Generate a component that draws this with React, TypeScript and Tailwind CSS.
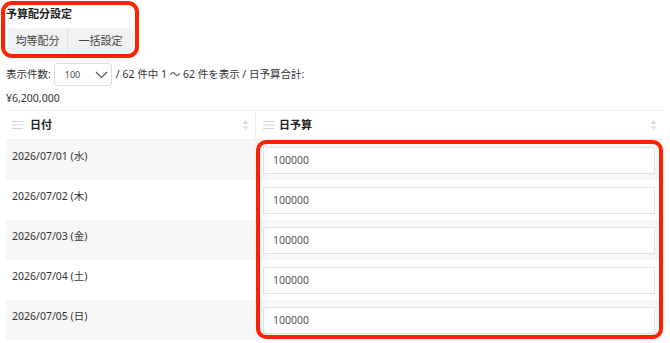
import React from "react";

const rows = [
  { date: "2026/07/01 (水)", value: "100000" },
  { date: "2026/07/02 (木)", value: "100000" },
  { date: "2026/07/03 (金)", value: "100000" },
  { date: "2026/07/04 (土)", value: "100000" },
  { date: "2026/07/05 (日)", value: "100000" },
];

const Grip: React.FC = () => (
  <svg width="11" height="8" viewBox="0 0 11 8" className="shrink-0">
    <path d="M0 0.5h11M0 4h11M0 7.5h11" stroke="#d4d4d4" strokeWidth="1" />
  </svg>
);

const SortArrows: React.FC = () => (
  <svg width="7" height="12" viewBox="0 0 7 12" className="shrink-0">
    <path d="M3.5 1L6.5 5H0.5Z" fill="#d9d9d9" />
    <path d="M3.5 11L6.5 7H0.5Z" fill="#e6e6e6" />
  </svg>
);

const App: React.FC = () => {
  return (
    <div
      className="relative w-[670px] h-[343px] overflow-hidden bg-white text-[#333]"
      style={{ fontFamily: '"Noto Sans", "Noto Sans CJK JP", sans-serif' }}
    >
      <div className="px-[6px] pt-[6px]">
        <div className="text-[11px] font-bold leading-[16px] text-[#222]">予算配分設定</div>
        <div className="mt-[6px] ml-[2px] flex w-fit rounded-[3px] bg-[#f1f1f1] text-[11px] text-[#444]">
          <button className="h-[27px] w-[60px] border-r border-[#e2e2e2]">均等配分</button>
          <button className="h-[27px] w-[65px]">一括設定</button>
        </div>

        <div className="mt-[8px] flex items-center text-[10.5px] text-[#333]">
          <span>表示件数:</span>
          <div className="ml-[3px] flex h-[23px] w-[58px] items-center justify-between rounded-[3px] border border-[#dcdcdc] pl-[10px] pr-[3px]">
            <span className="text-[9px] text-[#444]">100</span>
            <svg width="13" height="8" viewBox="0 0 13 8">
              <path d="M1 1l5.5 5.5L12 1" fill="none" stroke="#555" strokeWidth="1.2" />
            </svg>
          </div>
          <span className="ml-[4px]">/ 62 件中 1 〜 62 件を表示 / 日予算合計:</span>
        </div>
        <div className="mt-[4px] text-[10.5px] leading-[16px] text-[#333]">¥6,200,000</div>

        <div className="mt-[4px] w-[657px] border-t border-[#f0f0f0]">
          <div className="flex h-[29px] border-b border-[#f0f0f0] text-[11px] font-bold text-[#222]">
            <div className="flex w-[250px] items-center border-r border-[#f0f0f0] pl-[6px] pr-[6px]">
              <Grip />
              <span className="ml-[7px] flex-1">日付</span>
              <SortArrows />
            </div>
            <div className="flex flex-1 items-center pl-[7px] pr-[6px]">
              <Grip />
              <span className="ml-[5px] flex-1">日予算</span>
              <SortArrows />
            </div>
          </div>
          {rows.map((r, i) => (
            <div key={r.date} className={`flex h-[40px] ${i % 2 === 0 ? "bg-[#f7f7f7]" : "bg-white"}`}>
              <div className="w-[250px] pl-[6px] pt-[9px] text-[10.5px] leading-[14px] text-[#333]">{r.date}</div>
              <div className="flex-1 pl-[7px] pr-[8px] pt-[7px]">
                <div className="flex h-[27px] items-center border border-[#e3e3e3] bg-white pl-[9px] text-[10.5px] text-[#555]">
                  {r.value}
                </div>
              </div>
            </div>
          ))}
        </div>
      </div>

      <div className="pointer-events-none absolute left-[1px] top-[1px] h-[57px] w-[138px] rounded-[11px] border-[4px] border-[#ff2200]" />
      <div className="pointer-events-none absolute left-[256px] top-[140px] h-[199px] w-[407px] rounded-[10px] border-[4px] border-[#ff2200]" />
    </div>
  );
};

export default App;
